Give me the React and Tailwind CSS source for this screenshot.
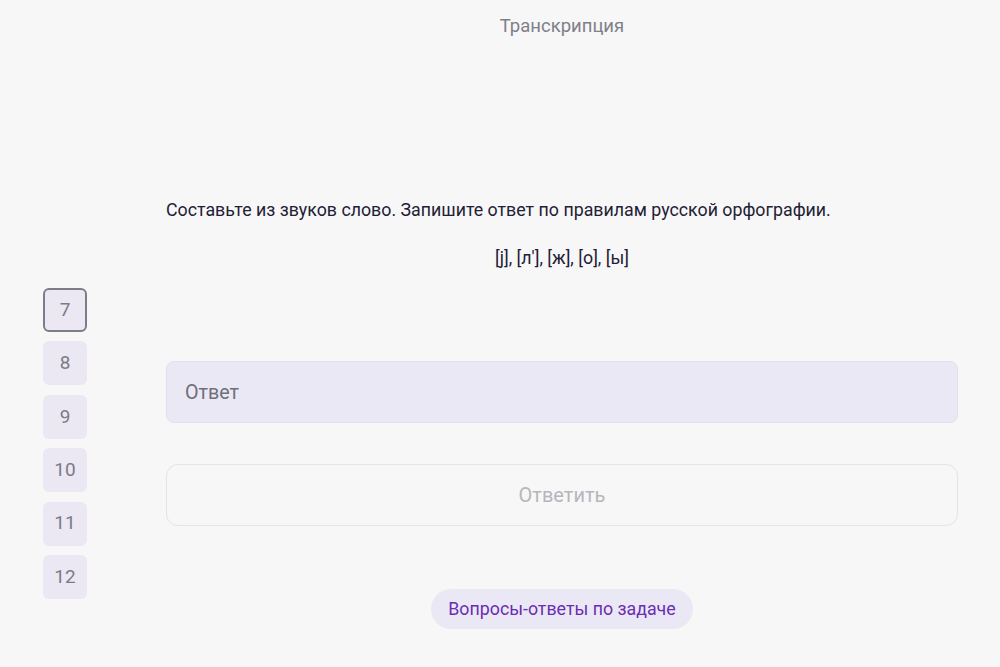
import React, { useState } from 'react';

const tasks = [7, 8, 9, 10, 11, 12];

const App = () => {
  const [active, setActive] = useState(7);
  const [answer, setAnswer] = useState('');

  return (
    <div className="flex h-[667px] w-full bg-[#f7f7f8] font-['Roboto',sans-serif] overflow-hidden">
      {/* Task list */}
      <div className="w-[166px] shrink-0 pl-[43px] pt-[288px] flex flex-col gap-[9.4px]">
        {tasks.map(n => (
          <button
            key={n}
            onClick={() => setActive(n)}
            className={`w-[44px] h-[44px] rounded-[6px] bg-[#ebe8f4] text-[19px] text-[#7b7b87] flex items-center justify-center
              ${active === n ? 'border-2 border-[#7d7d88]' : 'border-2 border-transparent'}`}
          >
            {n}
          </button>
        ))}
      </div>

      {/* Main */}
      <div className="w-[792px] shrink-0 flex flex-col">
        <h1 className="text-center text-[18.5px] text-[#808089] pt-[15px] leading-[22px]">Транскрипция</h1>

        <p className="mt-[162px] text-[17.8px] leading-[22px] text-[#1f2035]">
          Составьте из звуков слово. Запишите ответ по правилам русской орфографии.
        </p>
        <p className="mt-[26px] text-center text-[17.8px] leading-[22px] text-[#1f2035]">
          [j], [л'], [ж], [о], [ы]
        </p>

        <input
          value={answer}
          onChange={e => setAnswer(e.target.value)}
          placeholder="Ответ"
          className="mt-[92px] h-[62px] w-full rounded-[8px] bg-[#ebe8f5] border border-[#e2dfee] px-[18px] text-[19.7px] text-[#3a3a44] placeholder:text-[#6f6f79] outline-none"
        />

        <button className="mt-[41px] h-[62px] w-full rounded-[12px] border border-[#e4e4e8] text-[20px] text-[#b6b6bc]">
          Ответить
        </button>

        <div className="mt-[63px] flex justify-center">
          <button className="h-[40px] px-[17px] rounded-full bg-[#ebe8f5] text-[17.8px] text-[#6a2db3]">
            Вопросы-ответы по задаче
          </button>
        </div>
      </div>
    </div>
  );
};

export default App;
